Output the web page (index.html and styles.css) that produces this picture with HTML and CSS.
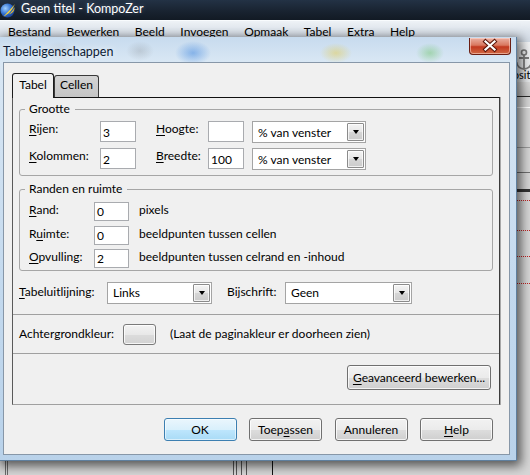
FILE: index.html
```html
<!DOCTYPE html>
<html lang="nl">
<head>
<meta charset="utf-8">
<title>Tabeleigenschappen</title>
<link rel="stylesheet" href="styles.css">
</head>
<body>
<div class="screen">
  <header class="apptitle">
    <svg class="appicon" viewBox="0 0 16 16" width="16" height="16" aria-hidden="true">
      <defs>
        <radialGradient id="globe" cx="0.35" cy="0.35" r="0.75">
          <stop offset="0" stop-color="#9fd0ff"/>
          <stop offset="0.55" stop-color="#2f6fd0"/>
          <stop offset="1" stop-color="#15347e"/>
        </radialGradient>
      </defs>
      <circle cx="7.5" cy="8.5" r="7" fill="url(#globe)"/>
      <path d="M3.5 14.5 C8 12.5 12 8.5 15 2 C11.5 6 8.5 9.5 3.5 14.5 Z" fill="#ffd531"/>
      <path d="M9 12 C11.5 10.5 13.5 8 14.5 5 C14.8 8.5 12.5 11.5 9 12 Z" fill="#f6c21c"/>
    </svg>
    <span class="apptitle-text">Geen titel - KompoZer</span>
  </header>
  <nav class="menubar">
    <span>Bestand</span><span>Bewerken</span><span>Beeld</span><span>Invoegen</span><span>Opmaak</span><span>Tabel</span><span>Extra</span><span>Help</span>
  </nav>
  <main class="workspace">
    <div class="toolbar">
      <svg class="anchor" viewBox="0 0 20 22" width="20" height="22" aria-hidden="true">
        <circle cx="10" cy="3.5" r="2.5" fill="none" stroke="#7d7d7d" stroke-width="1.6"/>
        <path d="M10 6 V20 M5 9 H15 M2.5 13 C3 18 7 20 10 20 C13 20 17 18 17.5 13" fill="none" stroke="#7d7d7d" stroke-width="1.8"/>
      </svg>
      <span class="tb-label">Positie</span>
    </div>
    <div class="tabstrip"></div>
    <div class="doc">
      <div class="doc-row r1"></div>
      <div class="doc-row r2"></div>
      <div class="doc-row r3"></div>
      <div class="doc-row r4"></div>
      <div class="doc-row r5"></div>
      <div class="doc-row r6"></div>
      <div class="doc-row r7"></div>
      <div class="doc-row r8"></div>
    </div>
  </main>

  <section class="dialog">
    <div class="dlg-title">
      <span class="dlg-title-text">Tabeleigenschappen</span>
      <button class="close" aria-label="Sluiten">
        <svg viewBox="0 0 42 17" width="42" height="17" aria-hidden="true">
          <path d="M16.5 4.5 L25.5 12.5 M25.5 4.5 L16.5 12.5" stroke="#5b1509" stroke-width="4.2" stroke-linecap="square"/>
          <path d="M16.5 4.5 L25.5 12.5 M25.5 4.5 L16.5 12.5" stroke="#ffffff" stroke-width="2.2" stroke-linecap="square"/>
        </svg>
      </button>
    </div>
    <div class="client">
      <div class="tabs">
        <div class="tab active">Tabel</div>
        <div class="tab">Cellen</div>
      </div>
      <div class="panel">
        <fieldset class="group size">
          <legend>Grootte</legend>
          <div class="size-grid">
            <label class="lbl"><u>R</u>ijen:</label>
            <span class="field big">3</span>
            <label class="lbl"><u>H</u>oogte:</label>
            <span class="field big"></span>
            <span class="select wide"><span class="select-text">% van venster</span><span class="drop"><i class="tri"></i></span></span>
            <label class="lbl"><u>K</u>olommen:</label>
            <span class="field big">2</span>
            <label class="lbl"><u>B</u>reedte:</label>
            <span class="field big">100</span>
            <span class="select wide"><span class="select-text">% van venster</span><span class="drop"><i class="tri"></i></span></span>
          </div>
        </fieldset>
        <fieldset class="group spacing">
          <legend>Randen en ruimte</legend>
          <div class="space-grid">
            <label class="lbl"><u>R</u>and:</label><span class="field small">0</span><span class="lbl">pixels</span>
            <label class="lbl">R<u>u</u>imte:</label><span class="field small">0</span><span class="lbl">beeldpunten tussen cellen</span>
            <label class="lbl"><u>O</u>pvulling:</label><span class="field small">2</span><span class="lbl">beeldpunten tussen celrand en -inhoud</span>
          </div>
        </fieldset>
        <div class="align-row">
          <label class="lbl l-align"><u>T</u>abeluitlijning:</label>
          <span class="select s-align"><span class="select-text">Links</span><span class="drop"><i class="tri"></i></span></span>
          <label class="lbl l-caption">Bijschrift:</label>
          <span class="select s-caption"><span class="select-text">Geen</span><span class="drop"><i class="tri"></i></span></span>
        </div>
        <hr class="sep sep1">
        <div class="color-row">
          <span class="lbl l-color">Achtergrondkleur:</span>
          <button class="swatch" aria-label="Achtergrondkleur"></button>
          <span class="lbl">(Laat de paginakleur er doorheen zien)</span>
        </div>
        <hr class="sep sep2">
        <div class="adv-row"><button class="btn adv"><u>G</u>eavanceerd bewerken...</button></div>
      </div>
      <div class="buttons">
        <button class="btn default">OK</button>
        <button class="btn">Toep<u>a</u>ssen</button>
        <button class="btn">Annuleren</button>
        <button class="btn"><u>H</u>elp</button>
      </div>
    </div>
  </section>
</div>
</body>
</html>
```
FILE: styles.css
```css
* { box-sizing: border-box; }
html, body { margin: 0; padding: 0; }
body {
  font-family: Lato, "Open Sans", "Noto Sans", sans-serif;
  font-size: 12px;
  color: #000;
}
u { text-decoration-thickness: 1px; text-underline-offset: 2px; }

.screen {
  position: relative;
  width: 530px;
  height: 475px;
  overflow: hidden;
  background: #d0d0d0;
}

/* ---------- application window behind ---------- */
.apptitle {
  height: 20px;
  display: flex;
  align-items: flex-start;
  gap: 5px;
  padding: 1px 0 0 0;
  background: linear-gradient(#233245, #18222f 60%, #121a24);
  color: #fff;
}
.appicon { flex: none; margin-top: 1px; }
.apptitle-text {
  font-size: 12.5px;
  line-height: 16px;
  text-shadow: 0 0 5px rgba(180, 210, 255, 0.35);
}

.menubar {
  height: 22px;
  display: flex;
  gap: 15.6px;
  padding: 4px 0 0 8px;
  line-height: 14px;
  background: linear-gradient(#eef2f6, #dde4ec 50%, #d3dce6);
  border-top: 1px solid #f8fbfd;
}

.workspace {
  height: 433px;
  display: flex;
  flex-direction: column;
}
.toolbar {
  height: 40px;
  display: flex;
  flex-direction: column;
  align-items: flex-end;
  background: linear-gradient(#f3f4f5, #e4e6e8);
}
.anchor { margin: 7px -4px 0 0; }
.tb-label { margin: -2px -9px 0 0; line-height: 12px; font-size: 11px; }
.tabstrip {
  height: 15px;
  background: linear-gradient(#d9d9d9, #c6c6c6);
  border-bottom: 1px solid #2a2a2a;
}
.doc {
  flex: 1;
  background-color: #d6d6d6;
  background-image:
    linear-gradient(to right,
      transparent 5px, #6a6a6a 5px, #6a6a6a 6px, transparent 6px,
      transparent 7px, #6a6a6a 7px, #6a6a6a 8px, transparent 8px,
      transparent 233px, #555 233px, #555 234px, transparent 234px,
      transparent 236px, #555 236px, #555 237px, transparent 237px,
      transparent 241px, #555 241px, #555 242px, transparent 242px,
      transparent 246px, #555 246px, #555 247px, transparent 247px,
      transparent 272px, #111 272px, #111 273px, transparent 273px);
}
.doc-row { border-bottom: 1px solid #8a8a8a; }
.r1 { height: 11px; border-bottom-color: #ffffff; }
.r2 { height: 40px; border-bottom-color: #9a9a9a; }
.r3 { height: 25px; border-bottom-color: #707070; }
.r4 { height: 19px; border-bottom: 3px solid #333; }
.r5 { height: 9px; border-bottom: 1px dotted #c42020; }
.r6 { height: 30px; border-bottom: 1px dotted #c42020; }
.r7 { height: 26px; border-bottom: 1px dotted #c42020; }
.r8 { height: 27px; border-bottom: 1px dotted #c42020; }

/* ---------- dialog window ---------- */
.dialog {
  position: absolute;
  left: 0;
  top: 37px;
  width: 517px;
  height: 424px;
  display: flex;
  flex-direction: column;
  padding: 0 6px 5px 3px;
  background:
    radial-gradient(ellipse 18px 12px at 193px 16px, rgba(40, 120, 220, 0.45), transparent),
    radial-gradient(ellipse 14px 10px at 140px 14px, rgba(90, 90, 90, 0.18), transparent),
    radial-gradient(ellipse 16px 10px at 336px 16px, rgba(230, 200, 60, 0.45), transparent),
    radial-gradient(ellipse 14px 10px at 430px 16px, rgba(90, 190, 80, 0.4), transparent),
    radial-gradient(ellipse 14px 10px at 60px 14px, rgba(150, 150, 150, 0.2), transparent),
    linear-gradient(#c7dbee, #d9e7f4 25px, #c3d9ee 60%, #b9d2ea);
  border-right: 1px solid #5f7f9e;
  border-bottom: 1px solid #5f7f9e;
  box-shadow: 2px 3px 10px 2px rgba(0, 0, 0, 0.6);
}
.dlg-title {
  height: 25px;
  flex: none;
  display: flex;
  align-items: flex-start;
}
.dlg-title-text {
  font-size: 12.5px;
  line-height: 16px;
  padding-top: 7px;
  color: #0c1a33;
  text-shadow: 0 0 6px rgba(255, 255, 255, 0.9);
}
.close {
  margin: 1px -1px 0 auto;
  width: 42px;
  height: 17px;
  padding: 0;
  border: 1px solid #6b1e12;
  border-top: 0;
  border-radius: 0 0 4px 4px;
  background: linear-gradient(#eab0a2, #d9785f 45%, #c2391f 55%, #d06a45);
  box-shadow: inset 0 0 0 1px rgba(255, 220, 210, 0.55);
  display: block;
}
.close svg { display: block; margin: -1px 0 0 -1px; }

.client {
  flex: 1;
  background: #f0f0f0;
  border: 1px solid #8797a8;
  display: flex;
  flex-direction: column;
}

/* tabs */
.tabs {
  height: 24px;
  margin-top: 10px;
  padding-left: 8px;
  display: flex;
  align-items: flex-end;
}
.tab {
  border: 1px solid #1c1c1c;
  border-bottom: 0;
  border-radius: 3px 3px 0 0;
  text-align: center;
  line-height: 14px;
}
.tab.active {
  width: 42px;
  height: 25px;
  margin-bottom: -1px;
  padding-top: 4px;
  background: #f0f0f0;
  position: relative;
  z-index: 1;
}
.tab:not(.active) {
  width: 45px;
  height: 22px;
  padding-top: 2px;
  border-color: #3a3a3a;
  background: linear-gradient(#d4d4d4, #c5c5c5);
}

/* tab panel */
.panel {
  height: 308px;
  margin: 0 9px 0 8px;
  padding: 0 6px;
  border-top: 1px solid #111;
  border-left: 1px solid #5a5a5a;
  border-right: 1px solid #3c3c3c;
  border-bottom: 1px solid #a0a0a0;
  box-shadow: 1px 0 0 #a8a8a8;
}

.lbl { line-height: 16px; white-space: nowrap; }

fieldset.group {
  margin: 0;
  padding: 0;
  min-width: 0;
  border: 1px solid #a6a6a6;
  border-radius: 3px;
}
fieldset.group legend {
  margin-left: 5px;
  padding: 0 5px 0 4px;
  line-height: 16px;
}
fieldset.size { margin-top: 3px; }
fieldset.spacing { margin-top: 5px; }

.size-grid {
  display: grid;
  grid-template-columns: 71px 56px 52px 44px 113px;
  grid-auto-rows: 21px;
  row-gap: 6px;
  padding: 4px 0 6px 9px;
}
.space-grid {
  display: grid;
  grid-template-columns: 65px 45px auto;
  grid-auto-rows: 19px;
  row-gap: 4.5px;
  padding: 5px 0 2px 9px;
}

.field {
  display: block;
  background: #fff;
  border: 1px solid #a9abaf;
  padding-left: 2px;
  line-height: 17px;
}
.field.big { width: 36px; height: 21px; padding-top: 2px; }
.field.small { width: 35px; height: 19px; padding-top: 0; }

.select {
  display: flex;
  height: 22px;
  background: #fff;
  border: 1px solid #a4a4a4;
}
.select-text {
  flex: 1;
  padding: 2px 0 0 5px;
  line-height: 17px;
  white-space: nowrap;
  overflow: hidden;
}
.drop {
  flex: none;
  width: 17px;
  margin: 1px 1px 1px 0;
  border: 1px solid #8b8b8b;
  border-radius: 1px;
  background: linear-gradient(#f4f4f4, #e6e6e6 50%, #d6d6d6 51%, #cbcbcb);
  box-shadow: inset 0 0 0 1px rgba(255, 255, 255, 0.7);
  display: flex;
  align-items: center;
  justify-content: center;
}
.tri {
  width: 0;
  height: 0;
  border-left: 3.5px solid transparent;
  border-right: 3.5px solid transparent;
  border-top: 4px solid #000;
}
.select.wide { width: 114px; }

.align-row {
  display: flex;
  align-items: flex-start;
  height: 22px;
  margin-top: 11px;
}
.l-align { width: 88px; padding-top: 2px; }
.s-align { width: 105px; }
.l-caption { width: 58px; margin-left: 15px; padding-top: 2px; }
.s-caption { width: 127px; }
.s-align .select-text, .s-caption .select-text { padding-top: 1px; }

.sep {
  margin: 0 -6px;
  height: 0;
  border: 0;
  border-top: 1px solid #a0a0a0;
}
.sep.sep1 { margin-top: 10px; }
.sep.sep2 { margin-top: 8px; }

.color-row {
  display: flex;
  align-items: flex-start;
  height: 21px;
  margin-top: 9px;
}
.color-row .lbl { padding-top: 2px; }
.l-color { width: 104px; }
.swatch {
  width: 33px;
  height: 21px;
  margin-right: 14px;
  padding: 0;
  border: 1px solid #7a7a7a;
  border-radius: 3px;
  background: linear-gradient(#f3f3f3, #e8e8e8 50%, #dcdcdc 51%, #d2d2d2);
  box-shadow: inset 0 0 0 1px rgba(255, 255, 255, 0.8);
}

.adv-row {
  display: flex;
  justify-content: flex-end;
  margin-top: 11px;
  padding-right: 2px;
}

.btn {
  font: inherit;
  color: #000;
  width: 73px;
  height: 23px;
  padding: 0;
  line-height: 20px;
  border: 1px solid #707070;
  border-radius: 3px;
  background: linear-gradient(#f2f2f2, #ebebeb 50%, #dddddd 51%, #cfcfcf);
  box-shadow: inset 0 0 0 1px rgba(255, 255, 255, 0.75);
  text-align: center;
  white-space: nowrap;
}
.btn.adv { width: 144px; height: 25px; line-height: 22px; }
.btn.default {
  border-color: #3c7fb1;
  background: linear-gradient(#eaf6fd, #d9f0fc 50%, #bee6fd 51%, #a9dbf6);
  box-shadow: inset 0 0 0 1px rgba(255, 255, 255, 0.55);
}

.buttons {
  display: flex;
  justify-content: flex-end;
  gap: 12.5px;
  margin-top: 13px;
  padding-right: 16px;
}
```
